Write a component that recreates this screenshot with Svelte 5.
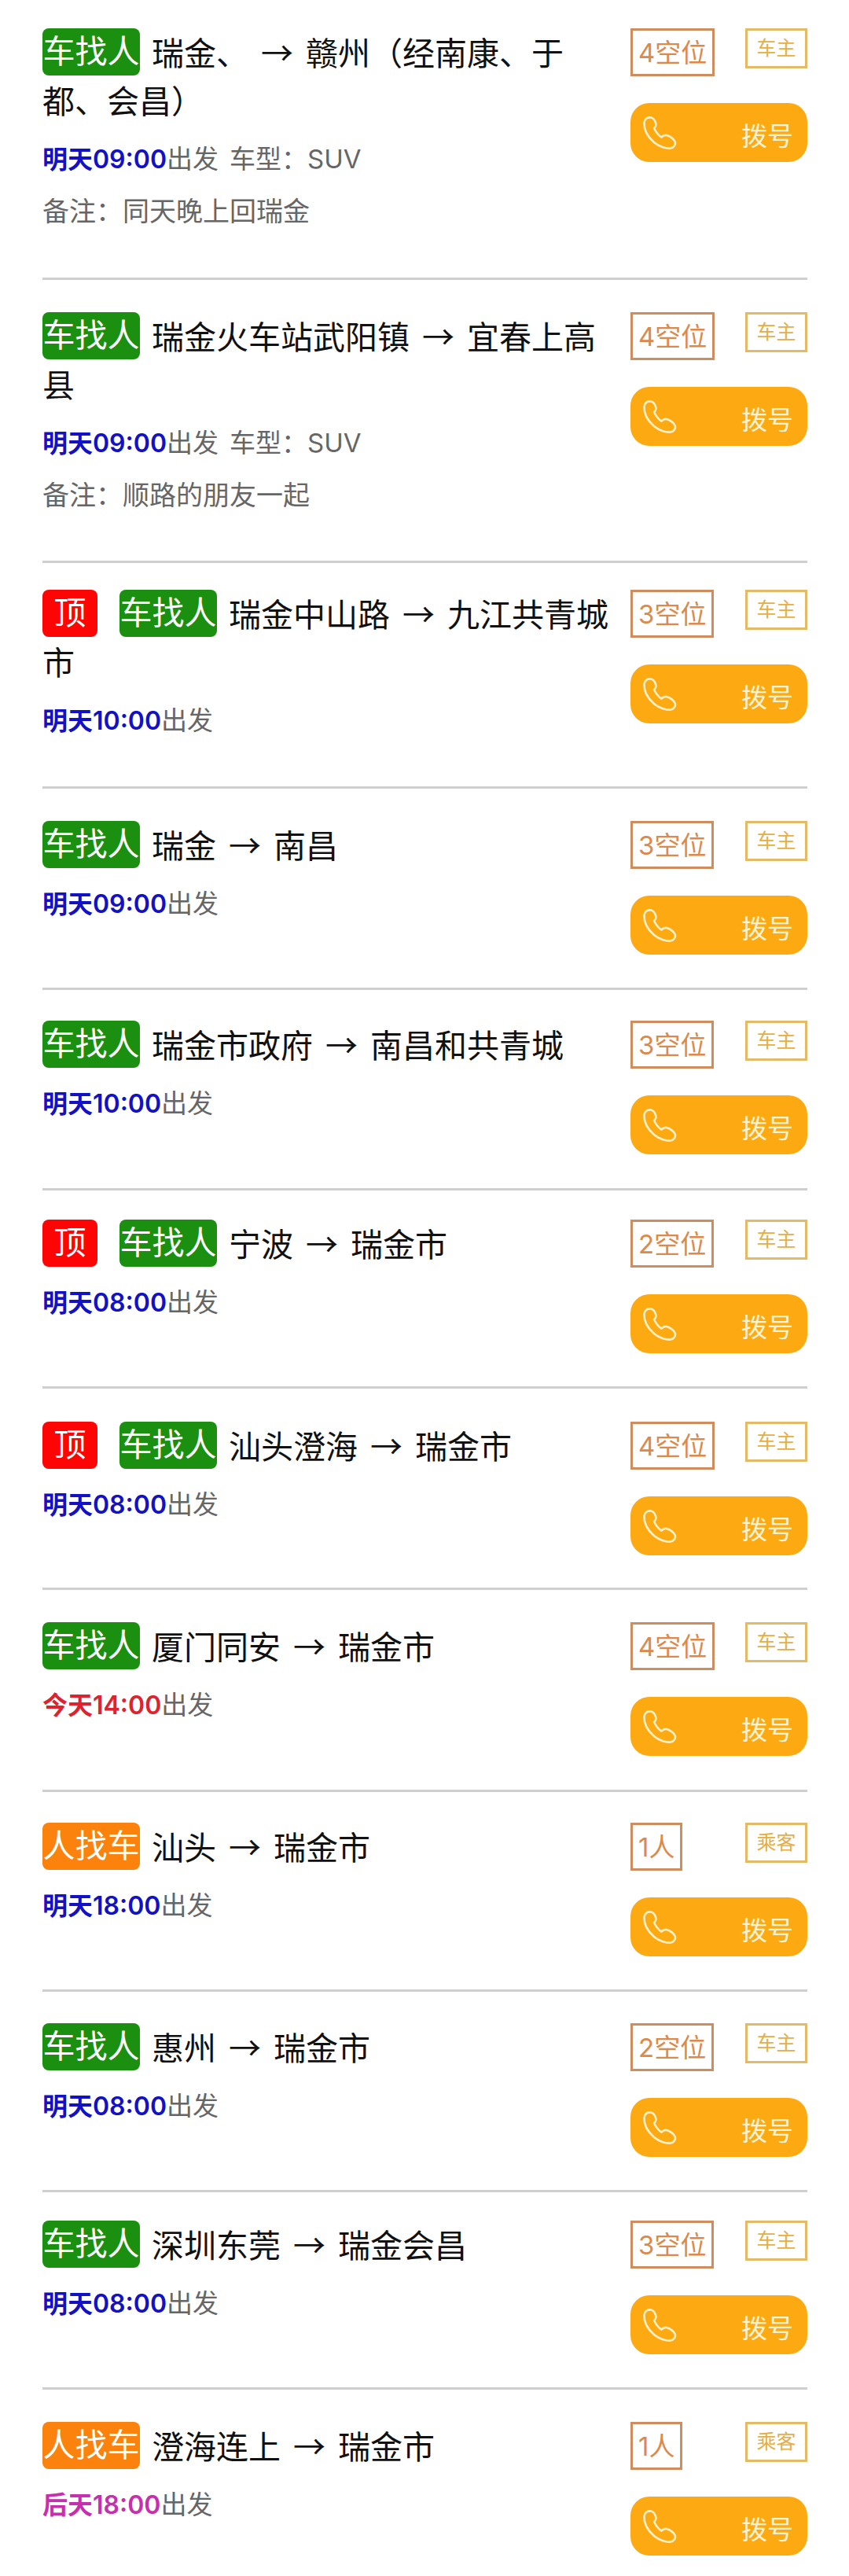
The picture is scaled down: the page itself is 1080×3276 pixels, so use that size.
<script>
  const B = '#1212c4', R = '#dd2230', M = '#c62fae';
  const cards = [
    { pad: 36, h: 356, kind: 'car', from: '瑞金、', to: '赣州（经南康、于都、会昌）', when: '明天09:00', color: B, model: 'SUV', note: '同天晚上回瑞金', seat: '4空位' },
    { pad: 41, h: 360, kind: 'car', from: '瑞金火车站武阳镇', to: '宜春上高县', when: '明天09:00', color: B, model: 'SUV', note: '顺路的朋友一起', seat: '4空位' },
    { pad: 34, h: 287, top: true, kind: 'car', from: '瑞金中山路', to: '九江共青城市', when: '明天10:00', color: B, seat: '3空位' },
    { pad: 41, h: 256, kind: 'car', from: '瑞金', to: '南昌', when: '明天09:00', color: B, seat: '3空位' },
    { pad: 39, h: 255, kind: 'car', from: '瑞金市政府', to: '南昌和共青城', when: '明天10:00', color: B, seat: '3空位' },
    { pad: 37, h: 252, top: true, kind: 'car', from: '宁波', to: '瑞金市', when: '明天08:00', color: B, seat: '2空位' },
    { pad: 42, h: 256, top: true, kind: 'car', from: '汕头澄海', to: '瑞金市', when: '明天08:00', color: B, seat: '4空位' },
    { pad: 41, h: 257, kind: 'car', from: '厦门同安', to: '瑞金市', when: '今天14:00', color: R, seat: '4空位' },
    { pad: 39, h: 254, kind: 'person', from: '汕头', to: '瑞金市', when: '明天18:00', color: B, seat: '1人' },
    { pad: 40, h: 255, kind: 'car', from: '惠州', to: '瑞金市', when: '明天08:00', color: B, seat: '2空位' },
    { pad: 36, h: 251, kind: 'car', from: '深圳东莞', to: '瑞金会昌', when: '明天08:00', color: B, seat: '3空位' },
    { pad: 41, h: 237, kind: 'person', from: '澄海连上', to: '瑞金市', when: '后天18:00', color: M, seat: '1人' }
  ];
</script>

<main class="list">
  {#each cards as c}
    <article class="card" style:height="{c.h}px" style:padding-top="{c.pad}px">
      <div class="info">
        <div class="title">
          {#if c.top}<span class="tag top">顶</span>{/if}<span class="tag" class:car={c.kind === 'car'} class:person={c.kind === 'person'}>{c.kind === 'car' ? '车找人' : '人找车'}</span>{c.from}<span class="arrow">→</span>{c.to}
        </div>
        <p class="meta"><span class="when" style:color={c.color}>{c.when}</span>出发{#if c.model}<span class="model">车型：{c.model}</span>{/if}</p>
        {#if c.note}<p class="note">备注：{c.note}</p>{/if}
      </div>
      <div class="side">
        <div class="badges">
          <span class="seat">{c.seat}</span>
          <span class="role">{c.kind === 'car' ? '车主' : '乘客'}</span>
        </div>
        <div class="call">
          <svg viewBox="0 0 60 60" width="60" height="60" fill="none" stroke="#fff0c8" stroke-width="2.6" stroke-linejoin="round" aria-hidden="true">
            <path d="M18 10.5C14 10 10 12 9.5 17C9 26 14 35 22 42C29 48 38 50 43 49.5C47 49 49.5 45 49 42C48 38 42 34 38 33C35 32.5 33 34 31.5 35.5C27 33 24 28 22 24C24 22.5 25 20 24 17C23 14 21 11 18 10.5Z" />
          </svg>
          <span>拨号</span>
        </div>
      </div>
    </article>
  {/each}
</main>

<style>
  :global(body) {
    margin: 0;
    background: #fff;
  }
  .list {
    width: 1080px;
    font-family: Inter, "Noto Sans CJK SC", sans-serif;
  }
  .card {
    box-sizing: border-box;
    margin: 0 53px 0 54px;
    display: flex;
    justify-content: space-between;
    border-bottom: 3px solid #cfcfcf;
  }
  .card:last-child {
    border-bottom: 0;
  }
  .info {
    width: 733px;
  }
  .title {
    margin-top: -1px;
    font-size: 41px;
    line-height: 61px;
    color: #111;
  }
  .tag {
    display: inline-block;
    vertical-align: top;
    width: 124px;
    height: 60px;
    margin-top: 1px;
    margin-right: 15px;
    border-radius: 8px;
    color: #fff;
    text-align: center;
    line-height: 59px;
  }
  .tag.top {
    width: 70px;
    margin-right: 28px;
    background: #fe0505;
  }
  .tag.car {
    background: #1a8f10;
  }
  .tag.person {
    background: #fb820c;
  }
  .arrow {
    margin: 0 16px;
    font-family: "Noto Sans CJK SC", sans-serif;
  }
  .meta,
  .note {
    margin: 0;
    font-size: 33px;
    line-height: 44px;
    color: #666;
  }
  .meta {
    margin-top: 20px;
  }
  .note {
    margin-top: 22px;
    font-size: 34px;
  }
  .when {
    font-size: 32px;
    font-weight: 600;
  }
  .model {
    margin-left: 14px;
  }
  .side {
    width: 225px;
  }
  .badges {
    display: flex;
    justify-content: space-between;
    align-items: flex-start;
  }
  .seat {
    box-sizing: border-box;
    height: 61px;
    padding: 0 7px;
    border: 3px solid #cf8c5c;
    color: #dc8a4c;
    font-size: 33px;
    line-height: 57px;
  }
  .role {
    box-sizing: border-box;
    width: 79px;
    height: 51px;
    border: 3px solid #e3bb66;
    color: #e6ae44;
    font-size: 25px;
    line-height: 44px;
    text-align: center;
  }
  .call {
    box-sizing: border-box;
    height: 75px;
    margin-top: 34px;
    padding: 0 18px 0 8px;
    display: flex;
    align-items: center;
    justify-content: space-between;
    border-radius: 24px;
    background: #fdaa12;
    color: #fff3d6;
    font-size: 33px;
  }
  .call span {
    padding-top: 5px;
  }
</style>
